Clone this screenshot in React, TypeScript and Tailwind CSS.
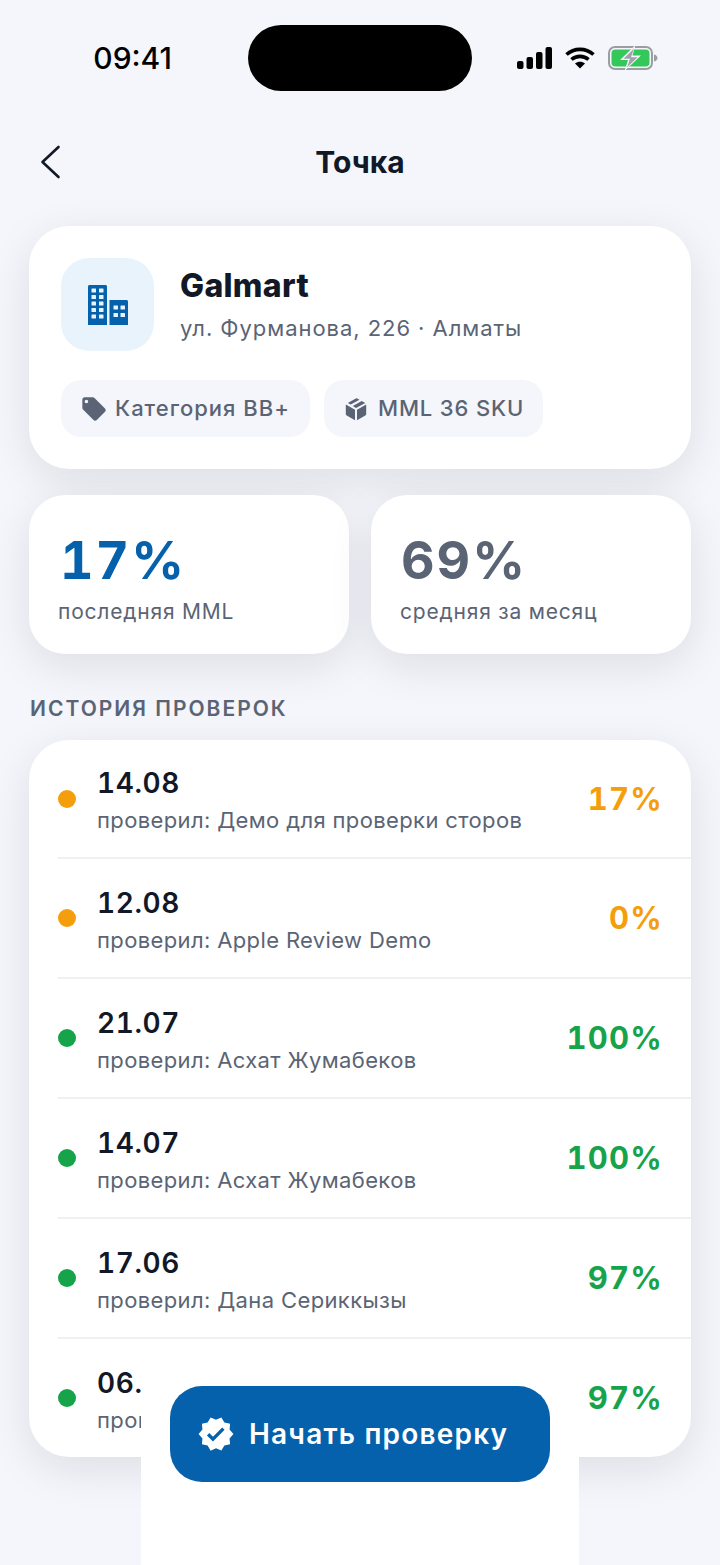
import React from "react";
import { MdVerified, MdLocalOffer } from "react-icons/md";

const rows = [
  { d: "14.08", n: "Демо для проверки сторов", v: "17%", c: "amber" },
  { d: "12.08", n: "Apple Review Demo", v: "0%", c: "amber" },
  { d: "21.07", n: "Асхат Жумабеков", v: "100%", c: "green" },
  { d: "14.07", n: "Асхат Жумабеков", v: "100%", c: "green" },
  { d: "17.06", n: "Дана Серикк\u044bзы", v: "97%", c: "green" },
  { d: "06.06", n: "Дана Серикк\u044bзы", v: "97%", c: "green" },
];

const cardShadow = "shadow-[0_12px_44px_rgba(17,24,39,0.1)]";

function Row({ r, i }: { r: (typeof rows)[number]; i: number }) {
  const last = i === rows.length - 1;
  const amber = r.c === "amber";
  return (
    <div className={`flex items-center pl-[29px] ${i === 0 ? "h-[119px]" : last ? "h-[118px]" : "h-[120px]"}`}>
      <div className={`flex h-full flex-1 items-center pr-[28px] ${last ? "" : "border-b-2 border-[#eef0f3]"}`}>
        <span className={`h-[18px] w-[18px] shrink-0 rounded-full ${amber ? "bg-[#f59e0b]" : "bg-[#16a34a]"}`} />
        <div className="ml-[21px] flex-1 pt-[3px]">
          <div className="text-[28px] leading-[34px] font-semibold tracking-[0.6px] text-[#111827] tabular-nums">{r.d}</div>
          <div className="mt-[6px] text-[22px] leading-[28px] tracking-[0.37px] text-[#5b6474]">проверил: {r.n}</div>
        </div>
        <div className={`text-[31px] leading-[36px] font-bold tracking-[1.2px] tabular-nums ${amber ? "text-[#f59e0b]" : "text-[#16a34a]"}`}>{r.v}</div>
      </div>
    </div>
  );
}

function Building() {
  return (
    <svg width="42" height="42" viewBox="0 0 42 42" fill="none">
      <path fill="#0561ab" d="M1 2.500C1 1.600 1.600 1 2.500 1h16c.9 0 1.500.6 1.500 1.500V41H1z" />
      <path fill="#0561ab" d="M22.500 16h17c.9 0 1.500.6 1.500 1.500V41H22.500z" />
      {[4.500, 11, 17.500, 24, 30.500].map((y) =>
        [4.500, 12].map((x) => <rect key={`${x}-${y}`} x={x} y={y} width="4.500" height="4" rx="0.500" fill="#e9f3fc" />)
      )}
      {[21.500, 29].map((y) =>
        [26.500, 33.500].map((x) => <rect key={`${x}-${y}`} x={x} y={y} width="4.500" height="4" rx="0.500" fill="#e9f3fc" />)
      )}
    </svg>
  );
}

function Box() {
  return (
    <svg width="24" height="24" viewBox="0 0 24 24">
      <path fill="#5b6474" d="M12.800 1.200l2.700 1.500-8.700 4.900-3-1.600 8-4.500a1 1 0 0 1 1 .0zM17.700 3.900l3.600 2-9.300 5-3.200-1.800zM1.800 7.600l9.200 5.100V23.200l-8.300-4.600a1.800 1.800 0 0 1-.9-1.500zM22.200 7.600v9.500a1.800 1.800 0 0 1-.9 1.500L13 23.200V12.700z" />
    </svg>
  );
}

function Signal() {
  return (
    <svg width="35" height="22" viewBox="0 0 35 22" fill="#000">
      <rect x="0" y="14" width="6.500" height="8" rx="2" />
      <rect x="9.500" y="10" width="6.500" height="12" rx="2" />
      <rect x="19" y="5" width="6.500" height="17" rx="2" />
      <rect x="28.500" y="0" width="6.500" height="22" rx="2" />
    </svg>
  );
}

function Wifi() {
  return (
    <svg width="30" height="22" viewBox="0 0 30 22" fill="none" stroke="#000" strokeWidth="3.600">
      <path d="M1.500 7.500C9 .6 21 .6 28.500 7.500" />
      <path d="M6.500 12.500c4.800-4.200 12.200-4.200 17 0" />
      <path d="M15 21.500l-5-5c2.800-2.400 7.200-2.400 10 0z" fill="#000" stroke="none" />
    </svg>
  );
}

function Battery() {
  return (
    <svg width="50" height="24" viewBox="0 0 50 24" fill="none">
      <rect x="1" y="1" width="43" height="22" rx="6" stroke="#9a9ea3" strokeWidth="2" />
      <rect x="3.500" y="3.500" width="38" height="17" rx="4" fill="#34c759" />
      <path d="M46 8.500c2.500.6 3.500 2 3.500 3.500s-1 2.900-3.500 3.500z" fill="#9a9ea3" />
      <path d="M27.500 -1L12 14h8L16.500 25 33 9.500h-8.500z" fill="#f4f6fb" />
      <path d="M26 2.500L15.500 12.800h6.500L19 21.500l10.500-10.300h-6.500z" fill="#a0a4a8" />
    </svg>
  );
}

export default function App() {
  return (
    <div className="relative h-[1565px] w-[720px] overflow-hidden bg-[#f4f6fb] font-['Inter','Liberation_Sans',sans-serif]">
      <div className="flex h-[116px] items-start pt-[25px]">
        <div className="flex h-[66px] w-[248px] items-center justify-end pr-[76px] text-[30px] font-medium text-black">09:41</div>
        <div className="h-[66px] w-[224px] rounded-[33px] bg-black" />
        <div className="flex h-[66px] items-center gap-[13px] pl-[45px]">
          <Signal />
          <Wifi />
          <Battery />
        </div>
      </div>

      <div className="relative flex h-[92px] items-center justify-center">
        <svg className="absolute top-[28px] left-[38px]" width="24" height="36" viewBox="0 0 24 36" fill="none" stroke="#111827" strokeWidth="2.600" strokeLinecap="round" strokeLinejoin="round">
          <path d="M20.500 3L4.500 18l16 15" />
        </svg>
        <div className="text-[30px] leading-[36px] font-bold text-[#111827]">Точка</div>
      </div>

      <div className="mt-[18px] px-[29px]">
        <div className={`h-[243px] rounded-[40px] bg-white px-[32px] pt-[32px] ${cardShadow}`}>
          <div className="flex">
            <div className="flex h-[93px] w-[93px] items-center justify-center rounded-[28px] bg-[#e9f3fc]">
              <Building />
            </div>
            <div className="ml-[26px] pt-[9px]">
              <div className="text-[32px] leading-[38px] font-extrabold tracking-[0.3px] text-[#111827]">Galmart</div>
              <div className="mt-[9px] text-[22px] leading-[28px] tracking-[0.95px] text-[#5b6474]">ул. Фурманова, 226 · Алматы</div>
            </div>
          </div>
          <div className="mt-[29px] flex gap-[14px]">
            <div className="flex h-[57px] w-[249px] items-center gap-[7px] rounded-[20px] bg-[#f4f6fb] pl-[19px]">
              <MdLocalOffer size={28} color="#5b6474" />
              <span className="text-[22px] font-medium tracking-[1px] text-[#5b6474]">Категория BB+</span>
            </div>
            <div className="flex h-[57px] w-[219px] items-center gap-[10px] rounded-[20px] bg-[#f4f6fb] pl-[20px]">
              <Box />
              <span className="text-[22px] font-medium tracking-[0.85px] text-[#5b6474]">MML 36 SKU</span>
            </div>
          </div>
        </div>

        <div className="mt-[26px] flex gap-[22px]">
          {[
            { v: "17%", l: "последняя MML", c: "text-[#0561ab] pl-[2px]" },
            { v: "69%", l: "средняя за месяц", c: "text-[#5b6474] pl-[1px]" },
          ].map((s) => (
            <div key={s.v} className={`h-[159px] flex-1 rounded-[36px] bg-white pt-[36px] pl-[29px] ${cardShadow}`}>
              <div className={`text-[52px] leading-[60px] font-bold tracking-[2px] tabular-nums ${s.c}`}>{s.v}</div>
              <div className="mt-[8px] text-[21px] leading-[26px] tracking-[0.8px] text-[#5b6474]">{s.l}</div>
            </div>
          ))}
        </div>

        <div className="mt-[42px] pl-[1px] text-[21px] leading-[26px] font-semibold tracking-[2px] text-[#5b6474]">ИСТОРИЯ ПРОВЕРОК</div>

        <div className={`mt-[18px] overflow-hidden rounded-[40px] bg-white ${cardShadow}`}>
          {rows.map((r, i) => (
            <Row key={i} r={r} i={i} />
          ))}
        </div>
      </div>

      <div className="absolute top-[1345px] bottom-0 left-[141px] flex w-[438px] justify-center bg-white pt-[41px]">
        <div className="flex h-[96px] w-[380px] items-center rounded-[32px] bg-[#0561ab] pl-[27px]">
          <MdVerified size={38} color="#fff" />
          <span className="ml-[14px] text-[28px] font-semibold tracking-[1.2px] text-white">Начать проверку</span>
        </div>
      </div>
    </div>
  );
}
